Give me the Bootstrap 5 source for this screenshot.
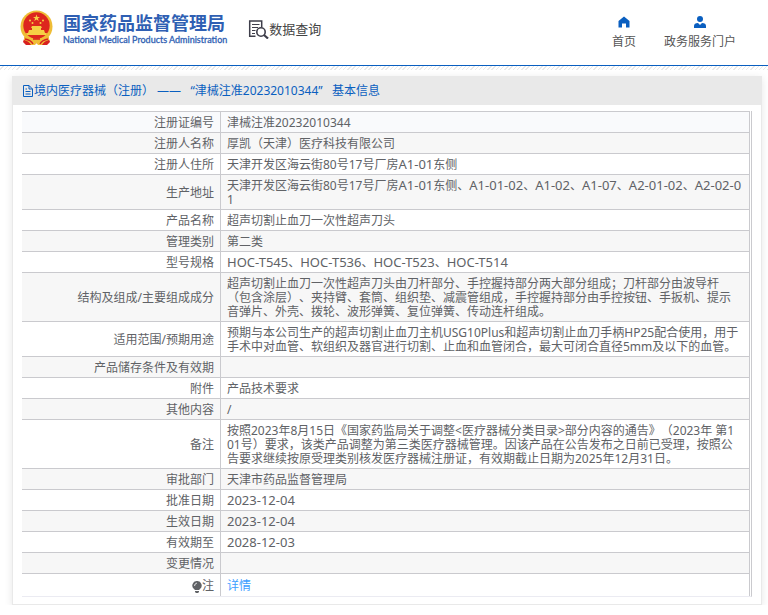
<!DOCTYPE html>
<html lang="zh-CN">
<head>
<meta charset="utf-8">
<meta name="viewport" content="width=device-width, initial-scale=1">
<title>国家药品监督管理局 数据查询</title>
<link href="https://cdn.jsdelivr.net/npm/bootstrap@5.3.0/dist/css/bootstrap.min.css" rel="stylesheet">
<style>
body{font-family:"Noto Sans","Noto Sans CJK SC",sans-serif;font-size:12px;line-height:14px;color:#606266;background:#fff;text-spacing-trim:space-all}
a{text-decoration:none}
.site-head{padding:10px 32px 15px 20px;border-bottom:1px solid #0a5fc0}
.hatch{height:4px;background:repeating-linear-gradient(135deg,#fff 0 2px,#e9e9e9 2px 3px)}
.brand{color:#2f5fb3;gap:10px}
.brand-cn{font-size:18px;line-height:22px;font-weight:700}
.brand-en{font-family:Lato,sans-serif;font-size:9px;line-height:12px;font-weight:400;-webkit-text-stroke:.3px #2f5fb3}
.brand-text{padding-top:2px}
.query{font-size:13px;line-height:18px;color:#444;margin:9px 0 0 21px}
.topnav{gap:28px;padding-top:6px}
.topnav a{color:#555;line-height:16px;gap:6px}
.panel{margin:6px 6px 0 12px;border:1px solid #e9e9e9;box-shadow:0 2px 8px rgba(0,0,0,.1)}
.panel-title{background:#e9e9e9;color:#0a5fc0;padding:7px 9px;line-height:14px;margin:0;font-size:12px;font-weight:400}
.frame{margin:6px 9px 7px;border-right:1px solid #cacace;border-bottom:1px solid #ebebf2;padding-right:1px}
.info{width:100%;border-collapse:separate;border-spacing:0;border-top:1px solid #cacace;border-right:1px solid #cacace;table-layout:fixed}
.info th{width:199px;text-align:right;font-weight:400;border-right:1px solid #cacace}
.info th,.info td{padding:4px 6px 2px;border-bottom:1px solid #cacace;word-break:break-all;vertical-align:middle;height:21px}
.info tr:nth-child(even){background:#f7f7f7}
.info tr:first-child{background:#f9fafc}
.info tr:last-child>*{border-bottom:0;height:22px}
.info a{color:#409eff}
.code-no{font-size:13px;line-height:0}
</style>
<script src="https://cdn.jsdelivr.net/npm/bootstrap@5.3.0/dist/js/bootstrap.bundle.min.js"></script>
</head>
<body>
<header class="site-head d-flex align-items-start">
<a class="brand d-flex align-items-start" href="#">
<svg width="33" height="38" viewBox="0 0 33 38" aria-hidden="true">
<path d="M5 26 3 32l3 3h6l4-2 5 2h6l3-3-2-6z" fill="#d8201f"/>
<circle cx="16.500" cy="16.500" r="16" fill="#efbd36"/><circle cx="16.500" cy="15.500" r="13.200" fill="#dd261e"/>
<path d="m16.500 4.500.9 2.400h2.600l-2.100 1.500.8 2.500-2.200-1.500-2.200 1.500.8-2.500L13 6.900h2.600z" fill="#f6cf45"/>
<g fill="#f6cf45"><circle cx="10" cy="10.500" r="1"/><circle cx="12.500" cy="13" r="1"/><circle cx="20.500" cy="13" r="1"/><circle cx="23" cy="10.500" r="1"/>
<path d="M12 16h9l1 2h-1v2h3l1 3H8l1-3h3v-2h-1zM6 23h21l-1 2H7z"/></g>
<path d="M4 27q6 2 9 5h7q3-3 9-5v3q-5 1-7 5h-4l-1.500-2-1.500 2h-4Q9 31 4 30z" fill="#efbd36"/>
<path d="M5 29q6 1 8 5M28 29q-6 1-8 5M13 29h7" stroke="#d8201f" stroke-width="1.500" fill="none"/>
</svg>
<span class="brand-text d-block"><span class="brand-cn d-block">国家药品监督管理局</span><span class="brand-en d-block">National Medical Products Administration</span></span>
</a>
<a class="query d-flex align-items-center" href="#">
<svg width="21" height="20" viewBox="0 0 21 20" fill="none" stroke="#3e3e4a" aria-hidden="true"><path d="M7.500 17.200H1.700V2h12v6" stroke-width="1.500"/><path d="M4 5.500h7.500M4 8.500h6M4 11.500h3.500M4 14.500h3" stroke-width="1.200"/><circle cx="13" cy="13" r="4.200" stroke-width="1.600"/><path d="m16 16 4 3.500" stroke-width="2.200"/></svg>
<span>数据查询</span></a>
<nav class="topnav d-flex ms-auto" aria-label="主导航">
<a href="#" class="d-flex flex-column align-items-center"><svg width="12" height="12" viewBox="0 0 12 12" aria-hidden="true"><path d="M6 .5 11.500 5v6.500H8V7.500H4v4H.5V5z" fill="#0a5fc0"/></svg>首页</a>
<a href="#" class="d-flex flex-column align-items-center"><svg width="12" height="12" viewBox="0 0 12 12" fill="#0a5fc0" aria-hidden="true"><circle cx="6" cy="3" r="3"/><path d="M0 12V10q0-3 4-3l2 2 2-2q4 0 4 3v2z"/></svg>政务服务门户</a>
</nav>
</header>
<div class="hatch"></div>
<main class="panel">
<h1 class="panel-title d-flex align-items-center"><svg width="12" height="12" viewBox="0 0 12 12" fill="none" stroke="#0a5fc0" aria-hidden="true"><path d="M1.500.5H7L10.500 4v7.500h-9zM7 .5V4h3.500M3.500 4H5M3.500 6.500h5M3.500 9h5"/></svg><span>境内医疗器械（注册） ——&nbsp;&nbsp; “津械注准20232010344”&nbsp;&nbsp; 基本信息</span></h1>
<div class="frame">
<table class="info"><tbody>
<tr><th scope="row">注册证编号</th><td>津械注准20232010344</td></tr>
<tr><th scope="row">注册人名称</th><td>厚凯（天津）医疗科技有限公司</td></tr>
<tr><th scope="row">注册人住所</th><td>天津开发区海云街80号17号厂房<span class="code-no">A1-01</span>东侧</td></tr>
<tr><th scope="row">生产地址</th><td>天津开发区海云街80号17号厂房<span class="code-no">A1-01</span>东侧、<span class="code-no">A1-01-02</span>、<span class="code-no">A1-02</span>、<span class="code-no">A1-07</span>、<span class="code-no">A2-01-02</span>、<span class="code-no">A2-02-0</span><br>1</td></tr>
<tr><th scope="row">产品名称</th><td>超声切割止血刀一次性超声刀头</td></tr>
<tr><th scope="row">管理类别</th><td>第二类</td></tr>
<tr><th scope="row">型号规格</th><td><span class="code-no">HOC-T545</span>、<span class="code-no">HOC-T536</span>、<span class="code-no">HOC-T523</span>、<span class="code-no">HOC-T514</span></td></tr>
<tr><th scope="row">结构及组成/主要组成成分</th><td>超声切割止血刀一次性超声刀头由刀杆部分、手控握持部分两大部分组成；刀杆部分由波导杆<br>（包含涂层）、夹持臂、套筒、组织垫、减震管组成，手控握持部分由手控按钮、手扳机、提示<br>音弹片、外壳、拨轮、波形弹簧、复位弹簧、传动连杆组成。</td></tr>
<tr><th scope="row">适用范围/预期用途</th><td>预期与本公司生产的超声切割止血刀主机USG10Plus和超声切割止血刀手柄HP25配合使用，用于<br>手术中对血管、软组织及器官进行切割、止血和血管闭合，最大可闭合直径5mm及以下的血管。</td></tr>
<tr><th scope="row">产品储存条件及有效期</th><td></td></tr>
<tr><th scope="row">附件</th><td>产品技术要求</td></tr>
<tr><th scope="row">其他内容</th><td>/</td></tr>
<tr><th scope="row">备注</th><td>按照2023年8月15日《国家药监局关于调整&lt;医疗器械分类目录&gt;部分内容的通告》（2023年 第1<br>01号）要求，该类产品调整为第三类医疗器械管理。因该产品在公告发布之日前已受理，按照公<br>告要求继续按原受理类别核发医疗器械注册证，有效期截止日期为2025年12月31日。</td></tr>
<tr><th scope="row">审批部门</th><td>天津市药品监督管理局</td></tr>
<tr><th scope="row">批准日期</th><td><span class="code-no">2023-12-04</span></td></tr>
<tr><th scope="row">生效日期</th><td><span class="code-no">2023-12-04</span></td></tr>
<tr><th scope="row">有效期至</th><td><span class="code-no">2028-12-03</span></td></tr>
<tr><th scope="row">变更情况</th><td></td></tr>
<tr><th scope="row"><svg width="10" height="12" viewBox="0 0 10 12" fill="#606266" aria-hidden="true"><path d="M5 0a4.500 4.500 0 0 1 3 8L7 9H3L2 8a4.500 4.500 0 0 1 3-8zM3 10h4v1L6 12H4L3 11z"/><path d="M2.500 5q0-2.500 2.500-3" stroke="#fff" stroke-width=".8" fill="none"/></svg>注</th><td><a href="#">详情</a></td></tr>
</tbody></table>
</div>
</main>
</body>
</html>
